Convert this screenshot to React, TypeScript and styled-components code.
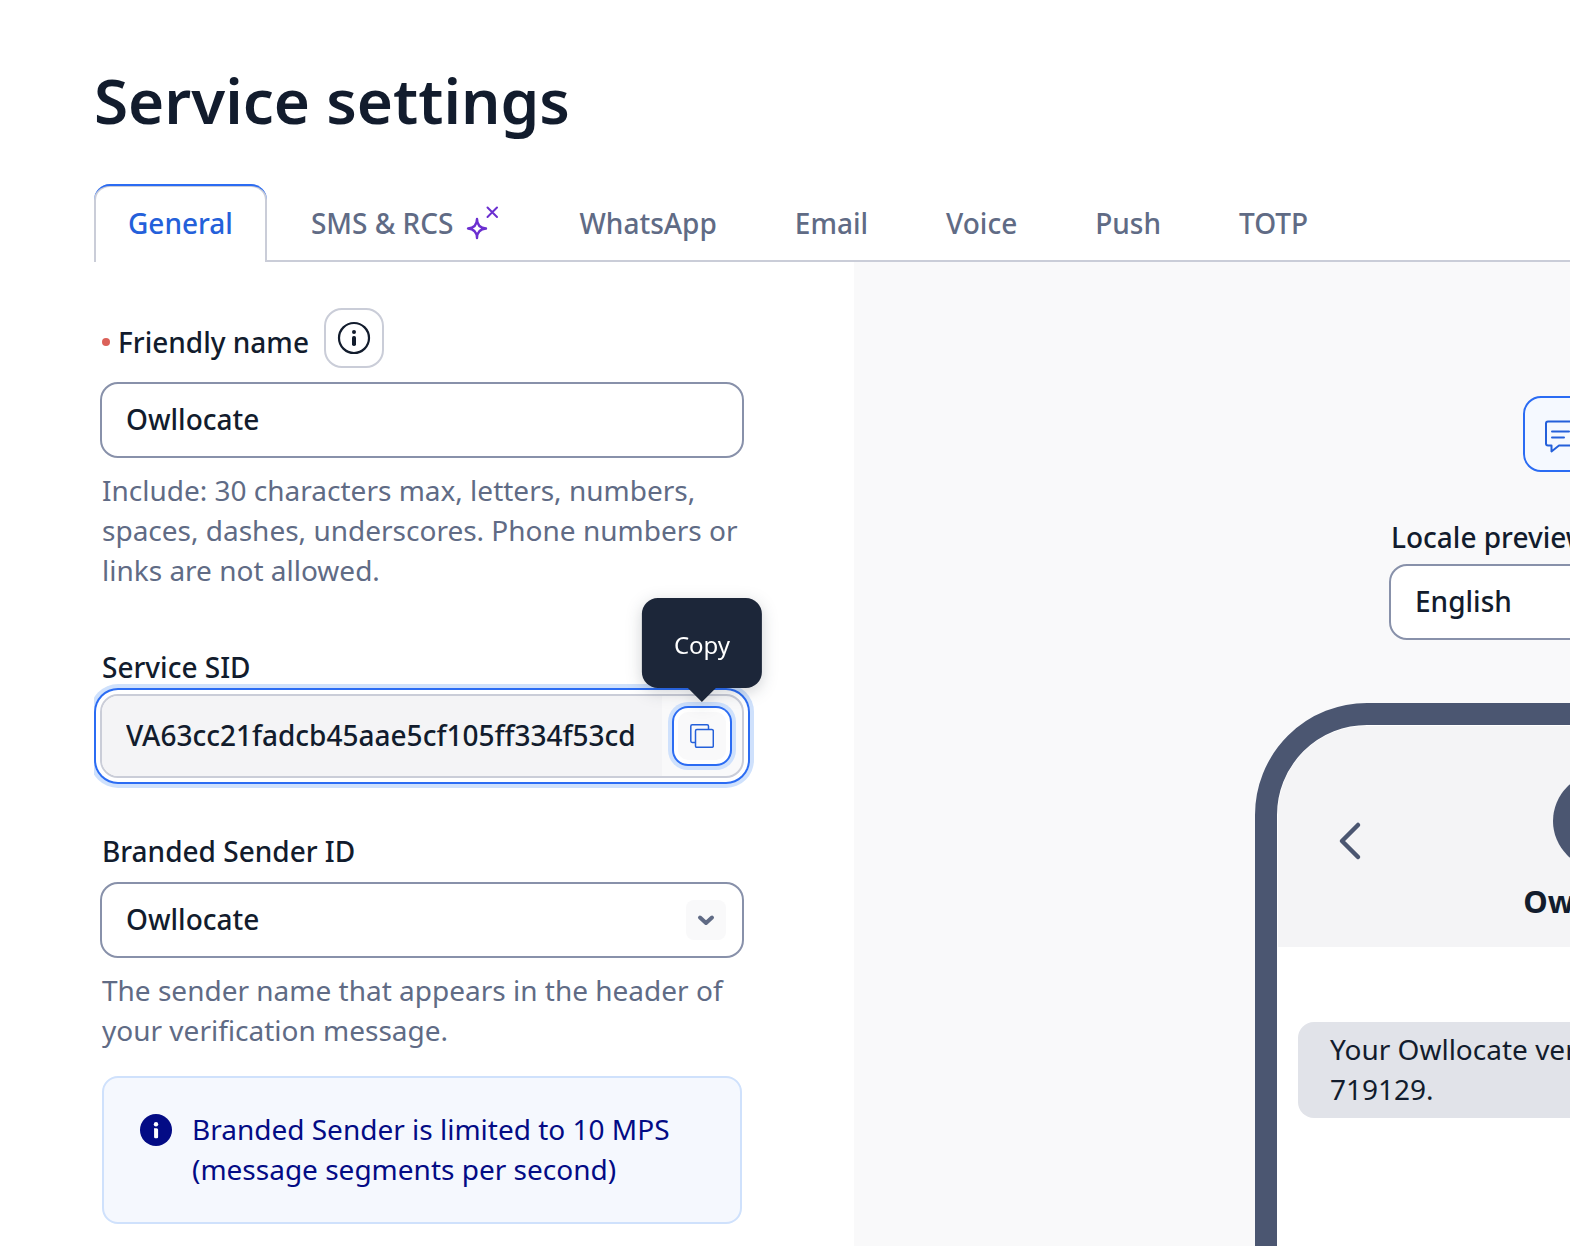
import React, { useState } from "react";
import styled, { createGlobalStyle, css } from "styled-components";

const color = {
  ink: "#121c2d",
  muted: "#606b85",
  link: "#2460da",
  primary: "#2b6cf3",
  halo: "#cfe1fc",
  line: "#cacdd8",
  field: "#8891aa",
  soft: "#f4f4f6",
  wash: "#f9f9fa",
  navy: "#030b85",
  slate: "#4b5671",
  violet: "#6b2fd0",
};

const GlobalStyle = createGlobalStyle`
  *, *::before, *::after { box-sizing: border-box; }
  body {
    margin: 0;
    overflow: hidden;
    background: #fff;
    color: ${color.ink};
    font: 400 28px/40px "Noto Sans", "Open Sans", sans-serif;
  }
  button, input, select { font: inherit; color: inherit; margin: 0; }
`;

const focusRing = css`
  box-shadow: 0 0 0 4px #fff, 0 0 0 6px ${color.primary}, 0 0 0 10px ${color.halo};
`;

const Page = styled.main`
  display: flex;
  flex-direction: column;
  height: 100vh;
  padding: 60px 0 0 94px;
  overflow: hidden;
`;

const Title = styled.h1`
  margin: 0 0 44px;
  font-size: 62px;
  line-height: 80px;
  font-weight: 600;
`;

const TabList = styled.div`
  display: flex;
  flex-shrink: 0;
  gap: 10px;
  box-shadow: inset 0 -2px ${color.line};
`;

const Tab = styled.button<{ $active?: boolean }>`
  position: relative;
  display: flex;
  align-items: center;
  gap: 8px;
  height: 78px;
  padding: 0 32px 3px;
  border: 2px solid transparent;
  border-top-width: 3px;
  border-bottom: 0;
  border-radius: 16px 16px 0 0;
  background: none;
  color: ${color.muted};
  font-weight: 500;
  white-space: nowrap;

  ${(p) =>
    p.$active &&
    css`
      background: #fff;
      color: ${color.link};
      border-color: ${color.line};

      &::after {
        content: "";
        position: absolute;
        inset: -3px -2px 0;
        border-top: 2px solid ${color.primary};
        border-radius: 16px 16px 0 0;
      }
    `}
`;

const Body = styled.div`
  display: flex;
  flex: 1;
  min-height: 0;
`;

const Form = styled.form`
  display: flex;
  flex-direction: column;
  flex: 0 0 760px;
  padding: 46px 110px 0 6px;
  overflow: hidden;
`;

const LabelRow = styled.div`
  display: flex;
  align-items: center;
  gap: 15px;
  margin-bottom: 14px;
  padding-left: 2px;
`;

const Label = styled.label`
  display: block;
  padding-left: 2px;
  font-weight: 500;
`;

const RequiredLabel = styled(Label)`
  display: flex;
  align-items: center;
  gap: 8px;
  padding: 8px 0 0;

  &::before {
    content: "";
    width: 8px;
    height: 8px;
    border-radius: 50%;
    background: #db6159;
  }
`;

const InfoButton = styled.button`
  display: grid;
  place-items: center;
  width: 60px;
  height: 60px;
  padding: 0;
  border: 2px solid ${color.line};
  border-radius: 18px;
  background: #fff;
`;

const fieldBox = css`
  display: block;
  width: 100%;
  height: 76px;
  padding: 0 24px 2px;
  border: 2px solid ${color.field};
  border-radius: 18px;
  background: #fff;
  font-weight: 500;
  outline: 0;
`;

const TextInput = styled.input`
  ${fieldBox}
`;

const SelectBox = styled.div`
  position: relative;
`;

const Select = styled.select`
  ${fieldBox}
  appearance: none;
`;

const SelectArrow = styled.span`
  position: absolute;
  top: 18px;
  right: 18px;
  display: grid;
  place-items: center;
  width: 40px;
  height: 40px;
  border-radius: 8px;
  background: ${color.wash};
  pointer-events: none;
`;

const Help = styled.p`
  margin: 12px 0 0;
  padding-left: 2px;
  color: ${color.muted};
`;

const SidLabel = styled(Label)`
  margin: 57px 0 7px;
`;

const SidBox = styled.div`
  display: flex;
  height: 84px;
  border: 2px solid ${color.line};
  border-radius: 18px;
  background: ${color.wash};
  ${focusRing}
`;

const SidInput = styled.input`
  flex: 1;
  min-width: 0;
  padding: 0 24px 2px;
  border: 0;
  border-radius: 16px 0 0 16px;
  background: ${color.soft};
  font-weight: 500;
  outline: 0;
`;

const CopyAction = styled.div`
  position: relative;
  display: flex;
  align-items: center;
  padding: 0 16px;
`;

const CopyButton = styled.button`
  display: grid;
  place-items: center;
  width: 48px;
  height: 48px;
  padding: 0;
  border: 0;
  border-radius: 10px;
  background: ${color.wash};
  ${focusRing}
`;

const Tooltip = styled.div`
  position: absolute;
  bottom: 88px;
  left: 50%;
  transform: translateX(-50%);
  height: 90px;
  padding: 27px 32px 0;
  border-radius: 16px;
  background: #1c2639;
  color: #fff;
  font-size: 24px;
  filter: drop-shadow(0 4px 8px rgba(18, 28, 45, 0.2));

  &::after {
    content: "";
    position: absolute;
    top: 100%;
    left: 50%;
    margin-left: -14px;
    border: 14px solid transparent;
    border-top-color: #1c2639;
    border-bottom: 0;
  }
`;

const SenderLabel = styled(Label)`
  margin: 53px 0 11px;
`;

const Alert = styled.div`
  display: flex;
  gap: 20px;
  margin: 26px 2px 0;
  padding: 31px 34px 33px 36px;
  border: 2px solid ${color.halo};
  border-radius: 16px;
  background: #f5f8fe;
  color: ${color.navy};

  svg {
    flex-shrink: 0;
    margin-top: 5px;
  }
`;

const AlertText = styled.p`
  margin: 0;
`;

const PreviewPanel = styled.section`
  flex: 1;
  min-width: 0;
  padding: 134px 0 0 401px;
  background: ${color.wash};
  overflow: hidden;
`;

const Preview = styled.div`
  display: flex;
  flex-direction: column;
  align-items: center;
  width: 692px;
`;

const ChannelButton = styled.button`
  display: flex;
  align-items: center;
  gap: 8px;
  width: 156px;
  height: 76px;
  padding: 2px 20px 0 16px;
  border: 2px solid ${color.primary};
  border-radius: 18px;
  background: #f5f9ff;
  color: ${color.link};
  font-weight: 500;
`;

const LocaleField = styled.div`
  width: 424px;
  margin: 45px 0 63px;
`;

const LocaleLabel = styled(Label)`
  margin-bottom: 7px;
`;

const Phone = styled.div`
  width: 100%;
  height: 1200px;
  padding: 1px;
  border: 22px solid ${color.slate};
  border-radius: 112px;
  background: #fff;
  overflow: hidden;
`;

const PhoneHeader = styled.header`
  display: grid;
  grid-template-columns: 1fr auto 1fr;
  align-items: center;
  height: 221px;
  padding: 0 57px;
  border-radius: 88px 88px 0 0;
  background: ${color.soft};
`;

const BackButton = styled.button`
  justify-self: start;
  padding: 8px 0 0;
  border: 0;
  background: none;

  svg {
    display: block;
  }
`;

const Contact = styled.div`
  display: flex;
  flex-direction: column;
  align-items: center;
  gap: 12px;
  padding-top: 20px;
  font-size: 31px;
  font-weight: 700;
`;

const Avatar = styled.span`
  width: 96px;
  height: 96px;
  border-radius: 50%;
  background: ${color.slate};
`;

const Bubble = styled.p`
  width: 560px;
  margin: 75px 0 0 20px;
  padding: 7px 32px 9px;
  border-radius: 16px;
  background: #e1e3e9;
`;

const SparkleIcon = () => (
  <svg width="40" height="40" viewBox="0 0 40 40" fill="none" stroke={color.violet} strokeWidth="2" strokeLinecap="round" strokeLinejoin="round" aria-hidden="true">
    <path d="M15 16c0 6-3 9-9 9.500c6 .5 9 3.500 9 9.500c0-6 3-9 9-9.500c-6-.5-9-3.500-9-9.500z" strokeWidth="2.400" />
    <path d="M25.500 4.500l9.500 9.500M35 4.500L25.500 14" />
  </svg>
);

const InfoIcon = () => (
  <svg width="34" height="34" viewBox="0 0 34 34" aria-hidden="true">
    <circle cx="17" cy="17" r="15" fill="none" stroke={color.ink} strokeWidth="2.200" />
    <circle cx="17" cy="11" r="2" fill={color.ink} />
    <rect x="15" y="15" width="4" height="10" rx="1.800" fill={color.ink} />
  </svg>
);

const InfoSolidIcon = () => (
  <svg width="32" height="32" viewBox="0 0 32 32" aria-hidden="true">
    <circle cx="16" cy="16" r="16" fill={color.navy} />
    <circle cx="16" cy="10.200" r="2.200" fill="#fff" />
    <path d="M14 14.200h2.600a1.500 1.500 0 0 1 1.500 1.500V23a1.200 1.200 0 0 1-1.200 1.200h-1.600a1.200 1.200 0 0 1-1.200-1.200v-6.800z" fill="#fff" />
  </svg>
);

const CopyIcon = () => (
  <svg width="24" height="24" viewBox="0 0 24 24" fill="none" stroke={color.link} strokeWidth="1.500" aria-hidden="true">
    <path d="M5 18.500H2.200A1.400 1.400 0 0 1 .8 17.100V2.200A1.400 1.400 0 0 1 2.200.8h14.900a1.400 1.400 0 0 1 1.400 1.400V5" />
    <rect x="5.500" y="5.500" width="17.800" height="17.800" rx="1.400" />
  </svg>
);

const ChevronDown = () => (
  <svg width="18" height="12" viewBox="0 0 18 12" fill="none" stroke={color.muted} strokeWidth="4" strokeLinecap="round" strokeLinejoin="round" aria-hidden="true">
    <path d="M3 3.500l6 5.500l6-5.500" />
  </svg>
);

const ChatIcon = () => (
  <svg width="36" height="36" viewBox="0 0 36 36" fill="none" stroke={color.link} strokeWidth="2" strokeLinecap="round" strokeLinejoin="round" aria-hidden="true">
    <path d="M10.500 28.500H7a2 2 0 0 1-2-2V6.500a2 2 0 0 1 2-2h24a2 2 0 0 1 2 2v20a2 2 0 0 1-2 2H18l-7.500 6v-6z" />
    <path d="M11 14.500h17M11 20.500h12" />
  </svg>
);

const BackIcon = () => (
  <svg width="30" height="42" viewBox="0 0 30 42" fill="none" stroke={color.slate} strokeWidth="4.500" strokeLinecap="round" strokeLinejoin="round" aria-hidden="true">
    <path d="M23 5L7 21l16 16" />
  </svg>
);

const tabs = ["General", "SMS & RCS", "WhatsApp", "Email", "Voice", "Push", "TOTP"];

export default function App() {
  const [active, setActive] = useState("General");
  const [name, setName] = useState("Owllocate");

  return (
    <>
      <GlobalStyle />
      <Page>
        <Title>Service settings</Title>
        <TabList role="tablist">
          {tabs.map((tab) => (
            <Tab key={tab} role="tab" aria-selected={tab === active} $active={tab === active} onClick={() => setActive(tab)}>
              {tab}
              {tab === "SMS & RCS" && <SparkleIcon />}
            </Tab>
          ))}
        </TabList>
        <Body>
          <Form onSubmit={(e) => e.preventDefault()}>
            <LabelRow>
              <RequiredLabel htmlFor="friendly-name">Friendly name</RequiredLabel>
              <InfoButton type="button" aria-label="About friendly name">
                <InfoIcon />
              </InfoButton>
            </LabelRow>
            <TextInput id="friendly-name" required value={name} onChange={(e) => setName(e.target.value)} />
            <Help>Include: 30 characters max, letters, numbers, spaces, dashes, underscores. Phone numbers or links are not allowed.</Help>

            <SidLabel htmlFor="service-sid">Service SID</SidLabel>
            <SidBox>
              <SidInput id="service-sid" readOnly value="VA63cc21fadcb45aae5cf105ff334f53cd" />
              <CopyAction>
                <CopyButton type="button" aria-label="Copy" aria-describedby="copy-tip">
                  <CopyIcon />
                </CopyButton>
                <Tooltip id="copy-tip" role="tooltip">Copy</Tooltip>
              </CopyAction>
            </SidBox>

            <SenderLabel htmlFor="sender-id">Branded Sender ID</SenderLabel>
            <SelectBox>
              <Select id="sender-id" defaultValue="Owllocate">
                <option>Owllocate</option>
              </Select>
              <SelectArrow>
                <ChevronDown />
              </SelectArrow>
            </SelectBox>
            <Help>The sender name that appears in the header of your verification message.</Help>
            <Alert>
              <InfoSolidIcon />
              <AlertText>Branded Sender is limited to 10 MPS (message segments per second)</AlertText>
            </Alert>
          </Form>

          <PreviewPanel aria-label="Message preview">
            <Preview>
              <ChannelButton type="button">
                <ChatIcon />
                SMS
              </ChannelButton>
              <LocaleField>
                <LocaleLabel htmlFor="locale">Locale preview</LocaleLabel>
                <SelectBox>
                  <Select id="locale" defaultValue="English">
                    <option>English</option>
                  </Select>
                  <SelectArrow>
                    <ChevronDown />
                  </SelectArrow>
                </SelectBox>
              </LocaleField>
              <Phone>
                <PhoneHeader>
                  <BackButton type="button" aria-label="Back">
                    <BackIcon />
                  </BackButton>
                  <Contact>
                    <Avatar />
                    Owllocate
                  </Contact>
                </PhoneHeader>
                <Bubble>
                  Your Owllocate verification code is: 719129.
                </Bubble>
              </Phone>
            </Preview>
          </PreviewPanel>
        </Body>
      </Page>
    </>
  );
}
